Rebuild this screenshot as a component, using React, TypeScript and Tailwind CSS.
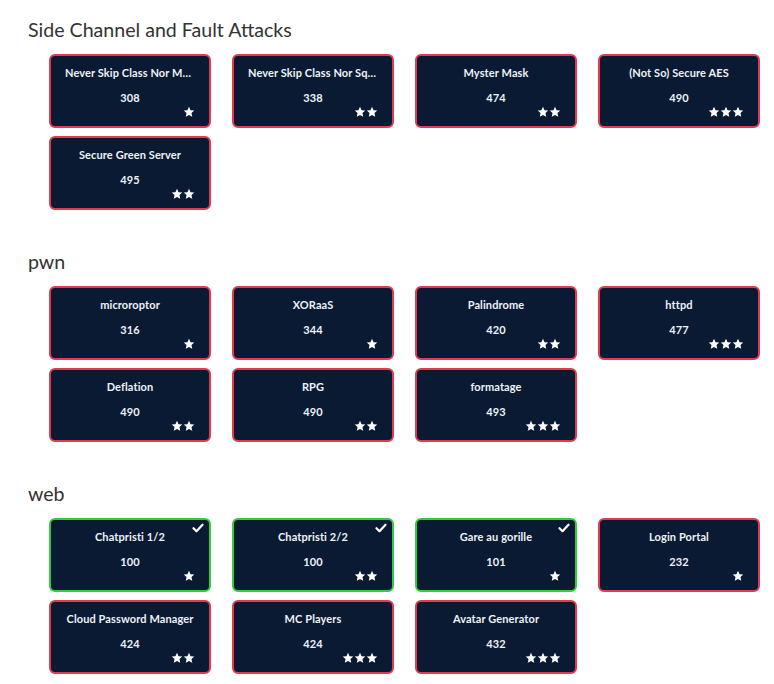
import React from "react";

type Ch = { name: string; pts: number; stars: number; solved?: boolean };

const sections: { title: string; items: Ch[] }[] = [
  {
    title: "Side Channel and Fault Attacks",
    items: [
      { name: "Never Skip Class Nor Math Lessons", pts: 308, stars: 1 },
      { name: "Never Skip Class Nor Square Roots", pts: 338, stars: 2 },
      { name: "Myster Mask", pts: 474, stars: 2 },
      { name: "(Not So) Secure AES", pts: 490, stars: 3 },
      { name: "Secure Green Server", pts: 495, stars: 2 },
    ],
  },
  {
    title: "pwn",
    items: [
      { name: "microroptor", pts: 316, stars: 1 },
      { name: "XORaaS", pts: 344, stars: 1 },
      { name: "Palindrome", pts: 420, stars: 2 },
      { name: "httpd", pts: 477, stars: 3 },
      { name: "Deflation", pts: 490, stars: 2 },
      { name: "RPG", pts: 490, stars: 2 },
      { name: "formatage", pts: 493, stars: 3 },
    ],
  },
  {
    title: "web",
    items: [
      { name: "Chatpristi 1/2", pts: 100, stars: 1, solved: true },
      { name: "Chatpristi 2/2", pts: 100, stars: 2, solved: true },
      { name: "Gare au gorille", pts: 101, stars: 1, solved: true },
      { name: "Login Portal", pts: 232, stars: 1 },
      { name: "Cloud Password Manager", pts: 424, stars: 2 },
      { name: "MC Players", pts: 424, stars: 3 },
      { name: "Avatar Generator", pts: 432, stars: 3 },
    ],
  },
];

function Star() {
  return (
    <svg width="12" height="12" viewBox="0 0 24 24" fill="#ffffff">
      <path d="M12 1.5l3.1 6.9 7.4.8-5.6 5 1.6 7.4L12 17.8l-6.5 3.8 1.6-7.4-5.6-5 7.4-.8z" />
    </svg>
  );
}

function Check() {
  return (
    <svg width="12" height="10" viewBox="0 0 12 10" fill="none" stroke="#ffffff" strokeWidth="2.2" strokeLinecap="round" strokeLinejoin="round">
      <path d="M1.5 5.2l3 3 6-6.5" />
    </svg>
  );
}

function Card({ c }: { c: Ch }) {
  return (
    <div
      className={`relative flex h-[74px] flex-col items-center rounded-[6px] border-2 bg-[#0a1a33] px-[14px] text-[11px] font-bold tracking-[0.01em] text-[#eef2f7] ${
        c.solved ? "border-[#33cc3d]" : "border-[#e23a4f]"
      }`}
    >
      {c.solved && (
        <div className="absolute right-[5px] top-[3px]">
          <Check />
        </div>
      )}
      <div className="mt-[9px] w-full truncate text-center leading-[16px]">{c.name}</div>
      <div className="mt-[9px] leading-[16px]">{c.pts}</div>
      <div className="flex w-full justify-end">
        {Array.from({ length: c.stars }).map((_, i) => (
          <Star key={i} />
        ))}
      </div>
    </div>
  );
}

export default function App() {
  return (
    <div className="min-h-[684px] bg-white pb-2 pt-[16px]" style={{ fontFamily: "Lato, 'Noto Sans', sans-serif" }}>
      {sections.map((s, i) => (
        <section key={s.title} className={i > 0 ? "mt-[38px]" : ""}>
          <h2 className="pl-[28px] text-[19.6px] font-normal leading-[28px] text-[#333333]">{s.title}</h2>
          <div className="mt-[10px] grid grid-cols-[repeat(4,162px)] gap-x-[21px] gap-y-[8px] pl-[49px]">
            {s.items.map((c) => (
              <Card key={c.name} c={c} />
            ))}
          </div>
        </section>
      ))}
    </div>
  );
}
